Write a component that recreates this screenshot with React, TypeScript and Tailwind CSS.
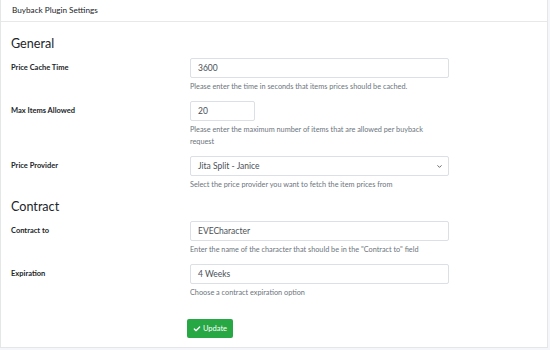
import { ChevronDown, Check } from 'lucide-react';

const font = { fontFamily: 'Lato, "Noto Sans", sans-serif' };

function Field({
  label,
  value,
  help,
  width = 'w-[259px]',
  select = false,
}: {
  label: string;
  value: string;
  help: string;
  width?: string;
  select?: boolean;
}) {
  return (
    <div className="flex mb-[8px]">
      <div className="w-[179px] shrink-0 pt-[5px] text-[7.5px] leading-[10px] font-bold text-[#212529]">
        {label}
      </div>
      <div className="w-[300px]">
        <div
          className={`${width} h-[20px] border border-[#dcdfe3] rounded-[2px] bg-white flex items-center justify-between pl-[7px] pr-[5px] text-[8.5px] text-[#495057]`}
        >
          <span>{value}</span>
          {select && <ChevronDown size={7} strokeWidth={3} className="text-[#555]" />}
        </div>
        <p className="mt-[3px] w-[252px] text-[7.3px] leading-[12px] text-[#6c757d]">{help}</p>
      </div>
    </div>
  );
}

export default function App() {
  return (
    <div className="w-[550px] h-[350px] bg-[#f4f6f9] overflow-hidden" style={font}>
      <div className="w-[548px] h-[348px] bg-white border-r border-b border-l border-[#e4e6e8]">
        <div className="h-[22px] border-b border-[#e6e8ea] px-[11px] flex items-center text-[8.2px] text-[#212529]">
          Buyback Plugin Settings
        </div>
        <div className="pl-[10px]">
          <h2 className="pt-[14px] mb-[6px] text-[12.6px] leading-[16px] text-[#212529]">General</h2>
          <Field
            label="Price Cache Time"
            value="3600"
            help="Please enter the time in seconds that items prices should be cached."
          />
          <Field
            label="Max Items Allowed"
            value="20"
            width="w-[65px]"
            help="Please enter the maximum number of items that are allowed per buyback request"
          />
          <Field
            label="Price Provider"
            value="Jita Split - Janice"
            select
            help="Select the price provider you want to fetch the item prices from"
          />
          <h2 className="mt-[1px] mb-[6px] text-[12.6px] leading-[16px] text-[#212529]">Contract</h2>
          <Field
            label="Contract to"
            value="EVECharacter"
            help={'Enter the name of the character that should be in the "Contract to" field'}
          />
          <Field label="Expiration" value="4 Weeks" help="Choose a contract expiration option" />
          <div className="pl-[176px] pt-[12px]">
            <button className="h-[19px] w-[46px] rounded-[2px] bg-[#28a745] text-white text-[7.5px] flex items-center justify-center gap-[2px]">
              <Check size={8} strokeWidth={4} />
              Update
            </button>
          </div>
        </div>
      </div>
    </div>
  );
}
